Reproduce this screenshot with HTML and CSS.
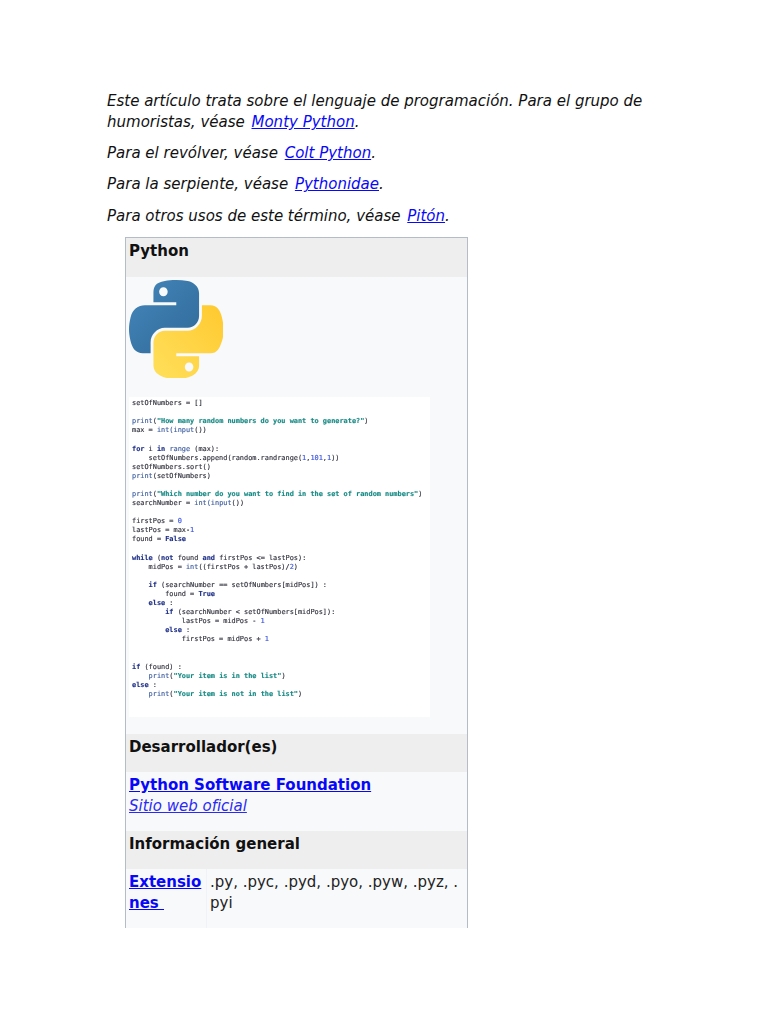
FILE: index.html
```html
<!DOCTYPE html>
<html lang="es">
<head>
<meta charset="utf-8">
<title>Python</title>
<link rel="stylesheet" href="styles.css">
</head>
<body>
<main class="page">
  <p class="note">Este artículo trata sobre el lenguaje de programación. Para el grupo de humoristas, véase <a href="#">Monty Python</a>.</p>
  <p class="note">Para el revólver, véase <a href="#">Colt Python</a>.</p>
  <p class="note">Para la serpiente, véase <a href="#">Pythonidae</a>.</p>
  <p class="note">Para otros usos de este término, véase <a href="#">Pitón</a>.</p>
  <div class="clip">
    <table class="infobox">
      <colgroup><col class="col-a"><col class="col-b"></colgroup>
      <tr><th colspan="2" class="head head-first">Python</th></tr>
      <tr>
        <td colspan="2" class="media">
          <svg class="logo" viewBox="0 0 110.4 111" preserveAspectRatio="none" aria-label="Python logo">
            <defs>
              <linearGradient id="blue" x1="0" y1="0" x2="1" y2="1"><stop offset="0" stop-color="#4a8fc4"/><stop offset="0.25" stop-color="#3f7fb2"/><stop offset="1" stop-color="#306998"/></linearGradient>
              <linearGradient id="yellow" x1="0" y1="1" x2="1" y2="0"><stop offset="0" stop-color="#ffe05a"/><stop offset="0.3" stop-color="#ffd94f"/><stop offset="1" stop-color="#ffc92f"/></linearGradient>
            </defs>
            <path fill="url(#blue)" fill-rule="evenodd" d="M54.919 0C50.336.022 45.958.413 42.106 1.095 30.76 3.099 28.7 7.295 28.7 15.032v10.219h26.813v3.406H18.638c-7.792 0-14.616 4.684-16.75 13.594-2.462 10.213-2.571 16.586 0 27.25 1.906 7.938 6.458 13.594 14.25 13.594h9.219v-12.25c0-8.85 7.657-16.656 16.75-16.656h26.781c7.455 0 13.406-6.138 13.406-13.625V15.032c0-7.266-6.13-12.725-13.406-13.937C64.282.328 59.502-.02 54.919 0zM40.419 8.22c2.77 0 5.031 2.299 5.031 5.125 0 2.816-2.262 5.094-5.031 5.094-2.779 0-5.031-2.277-5.031-5.094 0-2.826 2.252-5.125 5.031-5.125z"/>
            <path fill="url(#yellow)" fill-rule="evenodd" d="M85.638 28.657v11.906c0 9.231-7.826 17-16.75 17H42.106c-7.336 0-13.406 6.278-13.406 13.625v25.531c0 7.266 6.319 11.54 13.406 13.625 8.487 2.496 16.626 2.947 26.781 0 6.75-1.954 13.406-5.888 13.406-13.625V86.501H55.513v-3.406h40.188c7.792 0 10.696-5.435 13.406-13.594 2.799-8.399 2.68-16.476 0-27.25-1.926-7.757-5.604-13.594-13.406-13.594zM70.575 93.313c2.779 0 5.031 2.277 5.031 5.094 0 2.826-2.252 5.125-5.031 5.125-2.77 0-5.031-2.299-5.031-5.125 0-2.816 2.262-5.094 5.031-5.094z"/>
          </svg>
          <pre class="code"><span class="n">setOfNumbers = []</span>

<span class="f">print</span>(<span class="s">"How many random numbers do you want to generate?"</span>)
<span class="n">max = </span><span class="f">int(input</span>())

<span class="k">for</span> i <span class="k">in</span> <span class="f">range</span> (max):
    setOfNumbers.append(random.randrange(<span class="d">1</span>,<span class="d">101</span>,<span class="d">1</span>))
setOfNumbers.sort()
<span class="f">print</span>(setOfNumbers)

<span class="f">print</span>(<span class="s">"Which number do you want to find in the set of random numbers"</span>)
searchNumber = <span class="f">int(input</span>())

firstPos = <span class="d">0</span>
lastPos = max-<span class="d">1</span>
found = <span class="k">False</span>

<span class="k">while</span> (<span class="k">not</span> found <span class="k">and</span> firstPos &lt;= lastPos):
    midPos = <span class="f">int</span>((firstPos + lastPos)/<span class="d">2</span>)

    <span class="k">if</span> (searchNumber == setOfNumbers[midPos]) :
        found = <span class="k">True</span>
    <span class="k">else</span> :
        <span class="k">if</span> (searchNumber &lt; setOfNumbers[midPos]):
            lastPos = midPos - <span class="d">1</span>
        <span class="k">else</span> :
            firstPos = midPos + <span class="d">1</span>


<span class="k">if</span> (found) :
    <span class="f">print</span>(<span class="s">"Your item is in the list"</span>)
<span class="k">else</span> :
    <span class="f">print</span>(<span class="s">"Your item is not in the list"</span>)</pre>
        </td>
      </tr>
      <tr><th colspan="2" class="head">Desarrollador(es)</th></tr>
      <tr>
        <td colspan="2" class="org"><a href="#" class="strong">Python Software Foundation</a><br><a href="#" class="site">Sitio web oficial</a></td>
      </tr>
      <tr><th colspan="2" class="head">Información general</th></tr>
      <tr>
        <td class="label"><a href="#" class="strong">Extensiones&nbsp;</a></td>
        <td class="value">.py, .pyc, .pyd, .pyo, .pyw, .pyz, .pyi</td>
      </tr>
    </table>
  </div>
</main>
</body>
</html>
```

FILE: styles.css
```css
html, body {
  margin: 0;
  background: #fff;
}

body {
  font-family: "DejaVu Sans", sans-serif;
  font-size: 15px;
  line-height: 21px;
  color: #111;
}

.page {
  height: 1024px;
  box-sizing: border-box;
  padding: 91px 0 0 107px;
  overflow: hidden;
}

a {
  color: #0808f8;
}

.note {
  width: 545px;
  margin: 0 0 10.2px;
  font-style: italic;
}

.note a {
  margin-left: 2px;
}

.clip {
  width: 343px;
  height: 691px;
  margin: 10.2px 0 0 18px;
  overflow: hidden;
}

.infobox {
  width: 343px;
  table-layout: fixed;
  border-collapse: separate;
  border-spacing: 0;
  border: 1px solid #b4bcc8;
  background: #f8f9fa;
}

.col-a {
  width: 81px;
}

.infobox th,
.infobox td {
  padding: 3px;
  vertical-align: top;
  text-align: left;
  word-break: break-all;
}

.infobox .head {
  height: 32px;
  background: #eee;
  font-weight: bold;
  word-break: normal;
}

.infobox .head-first {
  height: 33px;
}

.infobox .media {
  height: 451px;
}

.logo {
  display: block;
  width: 94px;
  height: 98px;
}

.code {
  width: 301px;
  height: 320px;
  margin: 19px 0 0;
  padding: 2.5px 0 0 3px;
  box-sizing: border-box;
  background: #fff;
  font-family: "DejaVu Sans Mono", monospace;
  font-size: 6.9px;
  line-height: 9.08px;
  color: #33333f;
  white-space: pre;
  overflow: hidden;
  -webkit-text-stroke: 0.15px;
  filter: blur(0.45px);
}

.code .f { color: #3f5ea0; }
.code .s { color: #178a85; font-weight: bold; }
.code .k { color: #1f3088; font-weight: bold; }
.code .d { color: #3b55e0; }
.code .n { color: #33333f; }

.infobox .org {
  height: 53px;
}

.strong {
  font-weight: bold;
}

.site {
  font-style: italic;
  color: #2a2af4;
}

.infobox .label {
  height: 70px;
  border-right: 1px solid #f0f2f5;
}

.infobox .value {
  color: #222;
}
```
